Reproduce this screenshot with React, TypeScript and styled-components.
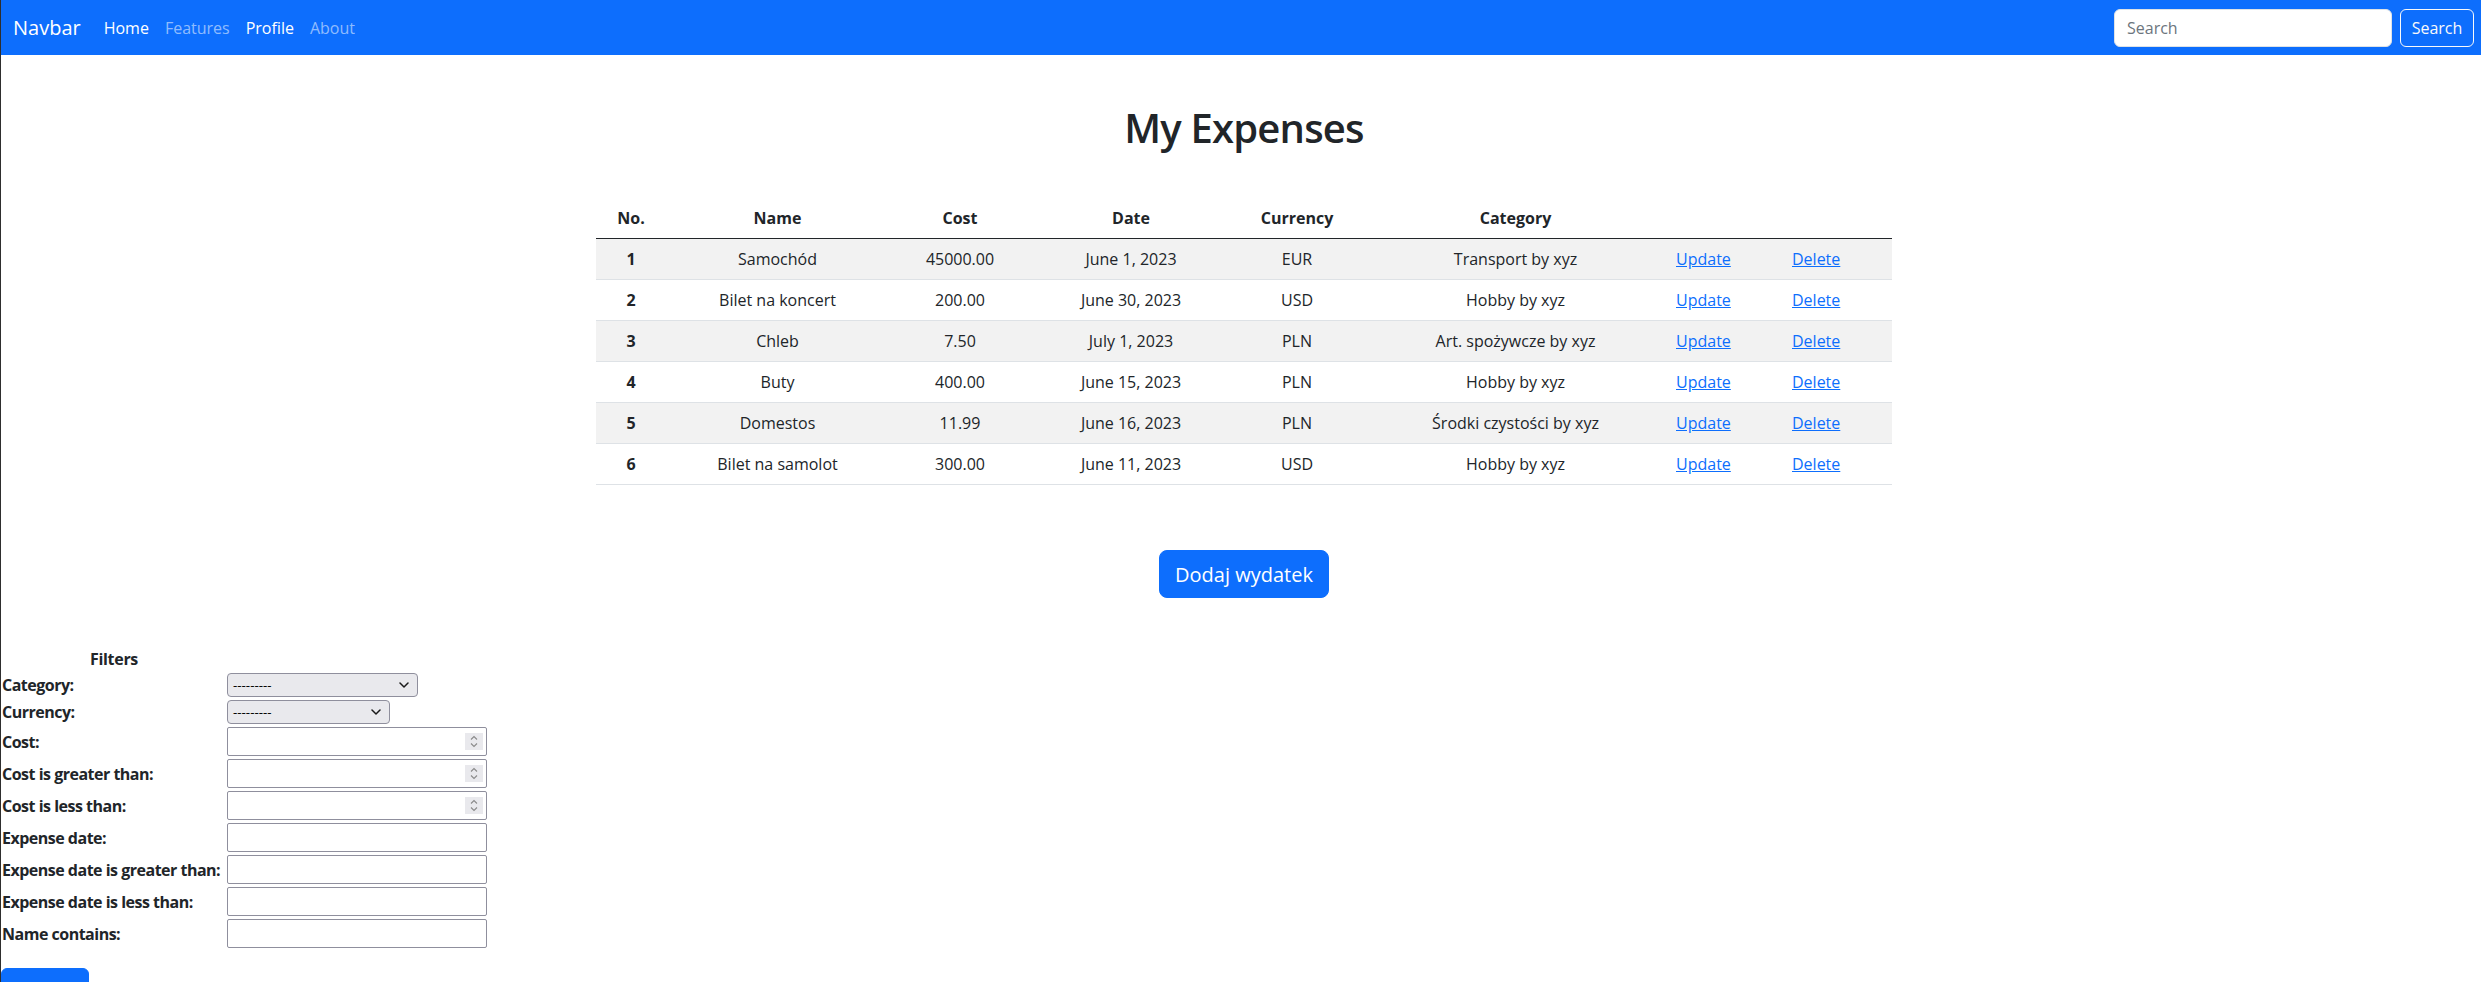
import React from "react";
import styled, { createGlobalStyle } from "styled-components";

const FONT = `"Open Sans", "Noto Sans", "Liberation Sans", sans-serif`;

const GlobalStyle = createGlobalStyle`
  html, body {
    margin: 0;
    padding: 0;
    height: 982px;
    overflow: hidden;
    background: #fff;
  }
  body {
    border-left: 1px solid #2e2e2e;
    font-family: ${FONT};
    font-size: 16px;
    color: #212529;
  }
  * { box-sizing: border-box; }
`;

const Navbar = styled.nav`
  height: 55px;
  background: #0d6efd;
  display: flex;
  align-items: center;
  padding: 0 7px 0 12px;
`;

const Brand = styled.a`
  font-size: 20px;
  line-height: 30px;
  color: #fff;
  text-decoration: none;
  margin-right: 15px;
`;

const NavList = styled.ul`
  display: flex;
  list-style: none;
  margin: 0;
  padding: 0;
`;

const NavLink = styled.a<{ $active?: boolean }>`
  display: block;
  padding: 8px 8px;
  font-size: 16px;
  line-height: 24px;
  text-decoration: none;
  color: ${(p) => (p.$active ? "#ffffff" : "rgba(255,255,255,0.55)")};
`;

const SearchForm = styled.form`
  margin-left: auto;
  display: flex;
  gap: 8px;
`;

const SearchInput = styled.input`
  width: 278px;
  height: 38px;
  padding: 6px 12px;
  border: 1px solid #dee2e6;
  border-radius: 6px;
  font-family: ${FONT};
  font-size: 16px;
  color: #212529;
  background: #fff;
  &::placeholder { color: #6c757d; }
`;

const SearchButton = styled.button`
  width: 74px;
  height: 38px;
  border: 1px solid #f8f9fa;
  border-radius: 6px;
  background: transparent;
  color: #f8f9fa;
  font-family: ${FONT};
  font-size: 16px;
  padding: 0;
`;

const Main = styled.main`
  padding: 49px 0 0 6px;
  display: flex;
  flex-direction: column;
  align-items: center;
`;

const Title = styled.h1`
  margin: 0 0 46px;
  font-size: 40px;
  font-weight: 600;
  letter-spacing: -0.8px;
  line-height: 48px;
  text-align: center;
`;

const Table = styled.table`
  width: 1296px;
  border-collapse: collapse;
  table-layout: fixed;
`;

const HeadCell = styled.th`
  padding: 8px;
  font-size: 16px;
  line-height: 24px;
  font-weight: 700;
  text-align: center;
  border-bottom: 1px solid #212529;
`;

const BodyRow = styled.tr<{ $striped: boolean }>`
  background: ${(p) => (p.$striped ? "#f2f2f2" : "#ffffff")};
`;

const Cell = styled.td<{ $bold?: boolean; $align?: "center" | "left" }>`
  padding: 8px;
  font-size: 16px;
  line-height: 24px;
  font-weight: ${(p) => (p.$bold ? 700 : 400)};
  text-align: ${(p) => p.$align || "center"};
  border-bottom: 1px solid #dee2e6;
  white-space: nowrap;
`;

const TableLink = styled.a`
  color: #0d6efd;
  text-decoration: underline;
`;

const ActionRow = styled.div`
  margin-top: 65px;
  display: flex;
  justify-content: center;
`;

const PrimaryLarge = styled.button`
  width: 170px;
  height: 48px;
  border: 1px solid #0d6efd;
  border-radius: 8px;
  background: #0d6efd;
  color: #fff;
  font-family: ${FONT};
  font-size: 20px;
  padding: 0;
`;

const FilterSection = styled.form`
  margin-top: 51px;
  display: flex;
  flex-direction: column;
  align-items: flex-start;
`;

const FilterGrid = styled.div`
  display: grid;
  grid-template-columns: 226px auto;
  row-gap: 3px;
  align-items: center;
  justify-items: start;
`;

const FilterHeading = styled.div`
  grid-column: 1;
  width: 100%;
  height: 21px;
  line-height: 21px;
  text-align: center;
  font-weight: 700;
  font-size: 16px;
  letter-spacing: -0.3px;
`;

const HeadingSpacer = styled.div`
  height: 21px;
`;

const FilterLabel = styled.label`
  padding-left: 1px;
  font-weight: 700;
  font-size: 16px;
  line-height: 20px;
  letter-spacing: -0.5px;
  white-space: nowrap;
`;

const SelectWrap = styled.div<{ $w: number }>`
  position: relative;
  width: ${(p) => p.$w}px;
  height: 24px;
`;

const Select = styled.select`
  appearance: none;
  -webkit-appearance: none;
  width: 100%;
  height: 100%;
  background: #e9e9ed;
  border: 1px solid #8f8f9d;
  border-radius: 4px;
  font-family: ${FONT};
  font-size: 13.33px;
  color: #000;
  padding: 0 24px 0 5px;
`;

const Chevron = styled.svg`
  position: absolute;
  right: 9px;
  top: 9px;
  pointer-events: none;
`;

const InputWrap = styled.div`
  position: relative;
  width: 260px;
  height: 29px;
`;

const TextInput = styled.input`
  appearance: textfield;
  -moz-appearance: textfield;
  width: 100%;
  height: 100%;
  border: 1px solid #8f8f9d;
  border-radius: 2px;
  background: #fff;
  font-family: ${FONT};
  font-size: 13.33px;
  padding: 0 26px 0 4px;
  &::-webkit-inner-spin-button,
  &::-webkit-outer-spin-button {
    -webkit-appearance: none;
    margin: 0;
  }
`;

const Spinner = styled.div`
  position: absolute;
  right: 4px;
  top: 6px;
  width: 18px;
  height: 17px;
  background: #e9e9ed;
  display: flex;
  align-items: center;
  justify-content: center;
  pointer-events: none;
`;

const FilterButton = styled.button`
  margin-top: 20px;
  width: 88px;
  height: 38px;
  border: 1px solid #0d6efd;
  border-radius: 6px;
  background: #0d6efd;
  padding: 0;
`;

const expenses = [
  { id: 1, name: "Samochód", cost: "45000.00", date: "June 1, 2023", currency: "EUR", category: "Transport by xyz" },
  { id: 2, name: "Bilet na koncert", cost: "200.00", date: "June 30, 2023", currency: "USD", category: "Hobby by xyz" },
  { id: 3, name: "Chleb", cost: "7.50", date: "July 1, 2023", currency: "PLN", category: "Art. spożywcze by xyz" },
  { id: 4, name: "Buty", cost: "400.00", date: "June 15, 2023", currency: "PLN", category: "Hobby by xyz" },
  { id: 5, name: "Domestos", cost: "11.99", date: "June 16, 2023", currency: "PLN", category: "Środki czystości by xyz" },
  { id: 6, name: "Bilet na samolot", cost: "300.00", date: "June 11, 2023", currency: "USD", category: "Hobby by xyz" },
];

const colWidths = [70, 223, 142, 200, 132, 305, 116, 108];

const ChevronDown = () => (
  <Chevron width="10" height="6" viewBox="0 0 10 6">
    <polyline points="1,1 5,5 9,1" fill="none" stroke="#1a1a1a" strokeWidth="1.5" strokeLinecap="round" strokeLinejoin="round" />
  </Chevron>
);

const SpinIcon = () => (
  <svg width="10" height="13" viewBox="0 0 10 13">
    <polyline points="2,4.5 5,1.5 8,4.5" fill="none" stroke="#8a8a8a" strokeWidth="1.1" />
    <polyline points="2,8.5 5,11.5 8,8.5" fill="none" stroke="#8a8a8a" strokeWidth="1.1" />
  </svg>
);

const NumberField = ({ id }: { id: string }) => (
  <InputWrap>
    <TextInput id={id} type="number" />
    <Spinner>
      <SpinIcon />
    </Spinner>
  </InputWrap>
);

const PlainField = ({ id }: { id: string }) => (
  <InputWrap>
    <TextInput id={id} type="text" />
  </InputWrap>
);

export default function App() {
  return (
    <>
      <GlobalStyle />
      <Navbar>
        <Brand href="#">Navbar</Brand>
        <NavList>
          <li><NavLink $active href="#">Home</NavLink></li>
          <li><NavLink href="#">Features</NavLink></li>
          <li><NavLink $active href="#">Profile</NavLink></li>
          <li><NavLink href="#">About</NavLink></li>
        </NavList>
        <SearchForm onSubmit={(e) => e.preventDefault()}>
          <SearchInput type="search" placeholder="Search" />
          <SearchButton type="submit">Search</SearchButton>
        </SearchForm>
      </Navbar>

      <Main>
        <Title>My Expenses</Title>
        <Table>
          <colgroup>
            {colWidths.map((w, i) => (
              <col key={i} style={{ width: w }} />
            ))}
          </colgroup>
          <thead>
            <tr>
              <HeadCell>No.</HeadCell>
              <HeadCell>Name</HeadCell>
              <HeadCell>Cost</HeadCell>
              <HeadCell>Date</HeadCell>
              <HeadCell>Currency</HeadCell>
              <HeadCell>Category</HeadCell>
              <HeadCell />
              <HeadCell />
            </tr>
          </thead>
          <tbody>
            {expenses.map((e, i) => (
              <BodyRow key={e.id} $striped={i % 2 === 0}>
                <Cell $bold>{e.id}</Cell>
                <Cell>{e.name}</Cell>
                <Cell>{e.cost}</Cell>
                <Cell>{e.date}</Cell>
                <Cell>{e.currency}</Cell>
                <Cell>{e.category}</Cell>
                <Cell $align="left"><TableLink href="#">Update</TableLink></Cell>
                <Cell $align="left"><TableLink href="#">Delete</TableLink></Cell>
              </BodyRow>
            ))}
          </tbody>
        </Table>
        <ActionRow>
          <PrimaryLarge type="button">Dodaj wydatek</PrimaryLarge>
        </ActionRow>
      </Main>

      <FilterSection onSubmit={(e) => e.preventDefault()}>
        <FilterGrid>
          <FilterHeading>Filters</FilterHeading>
          <HeadingSpacer />
          <FilterLabel htmlFor="f-category">Category:</FilterLabel>
          <SelectWrap $w={191}>
            <Select id="f-category" defaultValue="">
              <option value="">---------</option>
            </Select>
            <ChevronDown />
          </SelectWrap>
          <FilterLabel htmlFor="f-currency">Currency:</FilterLabel>
          <SelectWrap $w={163}>
            <Select id="f-currency" defaultValue="">
              <option value="">---------</option>
            </Select>
            <ChevronDown />
          </SelectWrap>
          <FilterLabel htmlFor="f-cost">Cost:</FilterLabel>
          <NumberField id="f-cost" />
          <FilterLabel htmlFor="f-cost-gt">Cost is greater than:</FilterLabel>
          <NumberField id="f-cost-gt" />
          <FilterLabel htmlFor="f-cost-lt">Cost is less than:</FilterLabel>
          <NumberField id="f-cost-lt" />
          <FilterLabel htmlFor="f-date">Expense date:</FilterLabel>
          <PlainField id="f-date" />
          <FilterLabel htmlFor="f-date-gt">Expense date is greater than:</FilterLabel>
          <PlainField id="f-date-gt" />
          <FilterLabel htmlFor="f-date-lt">Expense date is less than:</FilterLabel>
          <PlainField id="f-date-lt" />
          <FilterLabel htmlFor="f-name">Name contains:</FilterLabel>
          <PlainField id="f-name" />
        </FilterGrid>
        <FilterButton type="submit" aria-label="Filter" />
      </FilterSection>
    </>
  );
}
